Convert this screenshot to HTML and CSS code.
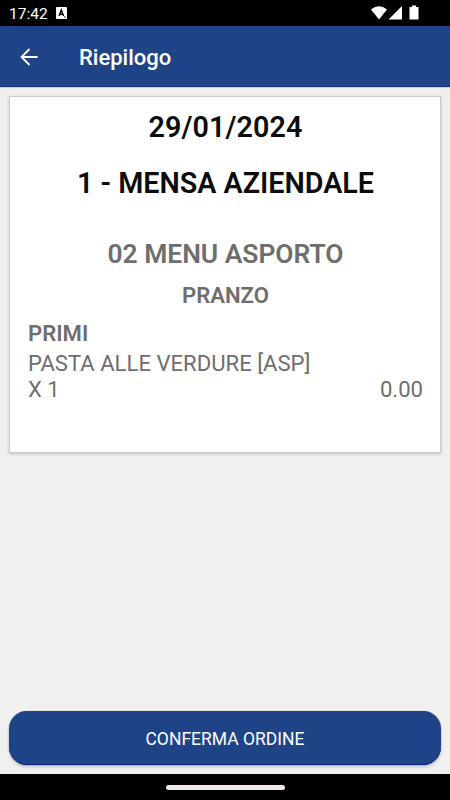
FILE: index.html
```html
<!DOCTYPE html>
<html lang="it">
<head>
<meta charset="utf-8">
<title>Riepilogo</title>
<link rel="stylesheet" href="styles.css">
</head>
<body>
<div class="status">
  <span class="clock">17:42</span>
  <svg class="badge" width="11" height="12" viewBox="0 0 11 12"><rect width="11" height="12" rx="1" fill="#fff"/><path d="M3 9 5.300 3 7.600 9M4 7.200h3" fill="none" stroke="#000" stroke-width="1.400"/><path d="M8 10h1.500" stroke="#000"/></svg>
  <svg class="sys" width="49" height="16" viewBox="0 0 49 16"><path d="M0 4.500Q8-2 16 4.500L8 14.500Z" fill="#fff"/><path d="M31 1V14.500H17.500Z" fill="#fff"/><path d="M38.500 2h2.500V.5h4V2h2.500v12.500h-9Z" fill="#fff"/></svg>
</div>
<header class="bar">
  <svg class="back" width="18" height="18" viewBox="0 0 18 18"><path d="M17.500 9H1.500M9.500 1 1.500 9 9.500 17" fill="none" stroke="#fff" stroke-width="1.800"/></svg>
  <h1 class="title">Riepilogo</h1>
</header>
<main class="content">
  <section class="card">
    <div class="date">29/01/2024</div>
    <div class="place">1 - MENSA AZIENDALE</div>
    <div class="menu">02 MENU ASPORTO</div>
    <div class="meal">PRANZO</div>
    <div class="course">PRIMI</div>
    <div class="dish">PASTA ALLE VERDURE [ASP]</div>
    <div class="row"><span>X 1</span><span>0.00</span></div>
  </section>
  <button class="confirm">CONFERMA ORDINE</button>
</main>
<div class="nav"><div class="handle"></div></div>
</body>
</html>
```
FILE: styles.css
```css
* { box-sizing: border-box; }
body { margin: 0; width: 450px; height: 800px; display: flex; flex-direction: column; font-family: Roboto, "Liberation Sans", sans-serif; background: #f0f0f0; overflow: hidden; }
.status { height: 26px; background: #000; color: #fff; display: flex; align-items: center; padding: 0 29px 0 9px; }
.clock { width: 39px; font-size: 15.5px; line-height: 24px; padding-top: 2px; }
.badge { margin: 0 0 0 8px; }
.sys { margin: 0 1px 0 auto; }
.bar { height: 61px; background: #1e4487; border-bottom: 1px solid #0c3580; color: #fff; display: flex; align-items: center; padding-left: 20px; box-shadow: 0 1px 1px #d0d4dc; }
.back { margin-top: 2px; }
.title { margin: 3px 0 0 41px; font-size: 22px; font-weight: 500; line-height: 28px; }
.content { flex: 1; display: flex; flex-direction: column; padding: 10px 9px 9px; }
.card { height: 355px; margin: 0 1px; background: #fff; box-shadow: 0 0 0 1px #cacccc, 0 1px 3px 1px #c0c2c2; padding: 13px 17px 0 18px; color: #6e6e6e; font-size: 22.1px; line-height: 26px; }
.date, .place, .menu, .meal { text-align: center; font-weight: 600; }
.date, .place { color: #0c0c0c; font-size: 28.7px; line-height: 34px; }
.date { letter-spacing: 0.1px; }
.place { margin-top: 22px; }
.menu { margin-top: 38px; font-size: 26.4px; line-height: 32px; }
.meal { margin-top: 12px; }
.course { margin-top: 12px; font-weight: 600; }
.dish { margin-top: 4px; }
.row { display: flex; justify-content: space-between; }
.confirm { margin-top: auto; height: 54px; border: 0; border-bottom: 1px solid #001d7c; border-radius: 18px; background: #1e4487; box-shadow: 0 0 1px #7d8594, 0 2px 3px #c0c0c4; color: #fff; font: 400 17.5px Roboto, "Liberation Sans", sans-serif; padding: 2px 0 0; }
.nav { height: 26px; background: #000; display: flex; align-items: center; justify-content: center; }
.handle { width: 119px; height: 5px; border-radius: 2.5px; background: #eee8ee; }
```
